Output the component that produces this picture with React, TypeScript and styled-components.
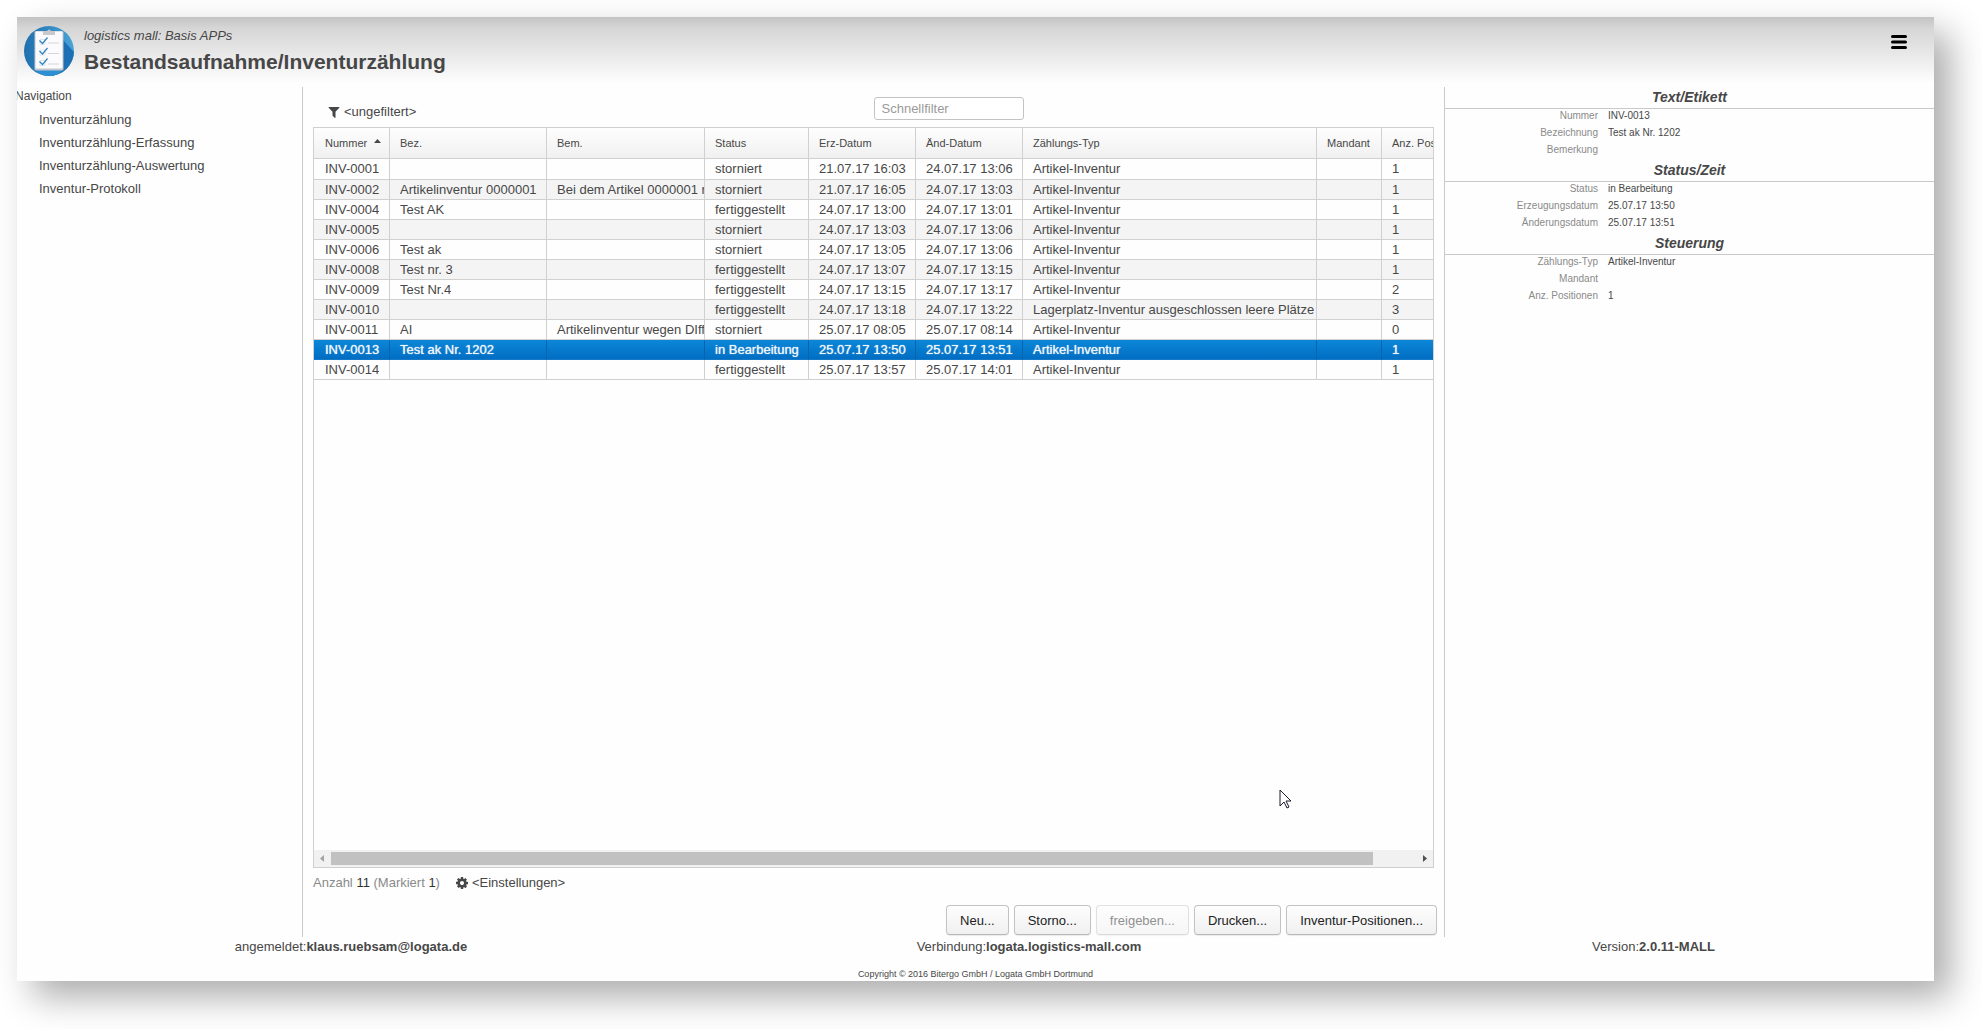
import React from "react";
import styled, { createGlobalStyle, css } from "styled-components";

const Global = createGlobalStyle`
  *, *::before, *::after { box-sizing: border-box; }
  html, body { margin: 0; background: #fff; }
  body {
    font-family: "Liberation Sans", Arial, sans-serif;
    font-size: 13px;
    line-height: 20px;
    color: #474747;
  }
  button, input { font: inherit; color: inherit; }
`;

const Page = styled.div`
  display: flex;
  min-height: 100vh;
  padding: 17px 48px 48px 17px;
`;

const Shell = styled.div`
  position: relative;
  flex: 1;
  min-width: 0;
  display: flex;
  flex-direction: column;
  background: #fefefe;
  box-shadow: 16px 16px 34px rgba(0, 0, 0, 0.33);
`;

const Header = styled.header`
  display: flex;
  align-items: flex-start;
  height: 70px;
  padding: 9px 24px 0 7px;
  background: linear-gradient(#c3c3c3, #d6d6d6 16%, #e4e4e4 45%, #fefefe 95%);
`;

const Logo = styled.svg`
  width: 50px;
  height: 50px;
  flex: none;
`;

const Titles = styled.div`
  flex: 1;
  padding-left: 10px;
`;

const Suite = styled.p`
  margin: 0;
  font-style: italic;
`;

const AppName = styled.h1`
  margin: 4px 0 0;
  font-size: 21px;
  line-height: 24px;
`;

const MenuButton = styled.button`
  margin-top: 5px;
  width: 22px;
  height: 22px;
  padding: 3px;
  border: 0;
  background: none;
  svg { display: block; width: 16px; height: 16px; }
`;

const Body = styled.div`
  flex: 1;
  display: grid;
  grid-template-columns: 286px minmax(0, 1142fr) minmax(0, 489fr);
`;

const Sidebar = styled.nav`
  border-right: 1px solid #c9c9c9;
  overflow: hidden;
`;

const NavTitle = styled.h2`
  margin: 0 0 0 -2px;
  font-size: 12px;
  font-weight: 400;
  line-height: 18px;
`;

const NavList = styled.ul`
  list-style: none;
  margin: 3px 0 0;
  padding: 0 0 0 22px;
`;

const NavItem = styled.li`
  line-height: 23px;
`;

const TextLink = styled.a`
  color: inherit;
  text-decoration: none;
`;

const Main = styled.main`
  display: flex;
  flex-direction: column;
  padding: 0 10px;
  border-right: 1px solid #c9c9c9;
`;

const Toolbar = styled.div`
  display: grid;
  grid-template-columns: 1fr 1fr;
  justify-items: start;
  height: 40px;
`;

const PlainButton = styled.button`
  display: flex;
  align-items: center;
  gap: 3px;
  height: 20px;
  padding: 0;
  border: 0;
  background: none;
  color: #474747;
`;

const FilterButton = styled(PlainButton)`
  margin: 15px 0 0 14px;
`;

const Glyph = styled.svg`
  width: 14px;
  height: 14px;
  fill: currentColor;
`;

const QuickFilter = styled.input`
  width: 150px;
  height: 23px;
  margin-top: 10px;
  padding: 0 7px;
  border: 1px solid #c3c3c3;
  border-radius: 3px;
  background: #fff;
  &::placeholder { color: #9a9a9a; opacity: 1; }
`;

const GridBox = styled.section`
  flex: 1;
  display: flex;
  flex-direction: column;
  border: 1px solid #d0d0d0;
  overflow: hidden;
`;

const Table = styled.table`
  width: 100%;
  table-layout: fixed;
  border-collapse: separate;
  border-spacing: 0;
`;

const cell = css`
  padding: 0 0 0 10px;
  overflow: hidden;
  white-space: nowrap;
  text-align: left;
  border-right: 1px solid #d0d0d0;
  border-bottom: 1px solid #d0d0d0;
  &:first-child { padding-left: 11px; }
  &:last-child { border-right: 0; }
`;

const HeadCell = styled.th`
  ${cell}
  height: 31px;
  font-size: 11px;
  font-weight: 400;
  background: linear-gradient(#fefefe, #f0f0f0);
`;

const SortArrow = styled.svg`
  width: 7px;
  height: 4px;
  margin: 0 0 4px 7px;
`;

const Cell = styled.td`
  ${cell}
  height: 20px;
  line-height: 19px;
  vertical-align: top;
`;

const Row = styled.tr<{ $selected: boolean }>`
  &:nth-child(even) { background: #f4f4f4; }
  &:first-child ${Cell} { height: 21px; }
  ${(p) =>
    p.$selected &&
    css`
      && { background: linear-gradient(#0c87d8, #006cc2); }
      ${Cell} {
        color: #eef6fc;
        text-shadow: 0 0 1px #eef6fc;
        border-right-color: #0663ad;
        border-bottom-color: #1579c6;
      }
    `}
`;

const ScrollTrack = styled.div`
  display: flex;
  align-items: center;
  height: 17px;
  margin-top: auto;
  background: #f1f1f1;
`;

const ScrollArrow = styled.svg`
  flex: none;
  width: 17px;
  height: 17px;
`;

const ScrollRail = styled.div`
  flex: 1;
`;

const ScrollThumb = styled.div`
  width: 96%;
  height: 13px;
  background: #c1c1c1;
`;

const Summary = styled.div`
  display: flex;
  align-items: center;
  gap: 15px;
  height: 30px;
  color: #8a8a8a;
  strong { font-weight: 400; color: #333; }
`;

const Actions = styled.div`
  display: flex;
  justify-content: flex-end;
  gap: 5px;
  margin: 7px -3px 2px 0;
`;

const ActionButton = styled.button`
  height: 30px;
  padding: 1px 13px 0;
  border: 1px solid #c3c3c3;
  border-bottom-color: #b8b8b8;
  border-radius: 4px;
  background: linear-gradient(#fefefe, #f0f0f0);
  color: #222;
  box-shadow: 0 1px 1px rgba(0, 0, 0, 0.08);
  &:disabled { opacity: 0.5; }
`;

const Details = styled.aside`
  min-width: 0;
`;

const GroupTitle = styled.h2`
  height: 22px;
  margin: 0;
  border-bottom: 1px solid #c9c9c9;
  font-size: 14px;
  font-style: italic;
  line-height: 20px;
  text-align: center;
`;

const Fields = styled.dl`
  display: grid;
  grid-template-columns: 153px 1fr;
  column-gap: 10px;
  margin: 0;
  font-size: 10px;
  line-height: 17px;
`;

const FieldName = styled.dt`
  height: 17px;
  margin-top: -2px;
  margin-bottom: 2px;
  color: #8a8a8a;
  text-align: right;
`;

const FieldValue = styled.dd`
  margin: -2px 0 2px;
`;

const Footer = styled.footer`
  height: 44px;
`;

const FooterRow = styled.div`
  display: grid;
  grid-template-columns: 668fr 688fr 561fr;
  text-align: center;
  line-height: 19px;
`;

const Copyright = styled.p`
  margin: 11px 0 0;
  font-size: 9px;
  line-height: 14px;
  text-align: center;
`;

const Pointer = styled.svg`
  position: absolute;
  left: 1262px;
  top: 772px;
  width: 13px;
  height: 21px;
`;

const navItems = [
  "Inventurzählung",
  "Inventurzählung-Erfassung",
  "Inventurzählung-Auswertung",
  "Inventur-Protokoll",
];

const columns: { label: string; width?: number }[] = [
  { label: "Nummer", width: 76 },
  { label: "Bez.", width: 157 },
  { label: "Bem.", width: 158 },
  { label: "Status", width: 104 },
  { label: "Erz-Datum", width: 107 },
  { label: "Änd-Datum", width: 107 },
  { label: "Zählungs-Typ" },
  { label: "Mandant", width: 65 },
  { label: "Anz. Pos.", width: 51 },
];

const item = "Artikel-Inventur";
const rows = [
  ["INV-0001", "", "", "storniert", "21.07.17 16:03", "24.07.17 13:06", item, "", "1"],
  ["INV-0002", "Artikelinventur 0000001", "Bei dem Artikel 0000001 n", "storniert", "21.07.17 16:05", "24.07.17 13:03", item, "", "1"],
  ["INV-0004", "Test AK", "", "fertiggestellt", "24.07.17 13:00", "24.07.17 13:01", item, "", "1"],
  ["INV-0005", "", "", "storniert", "24.07.17 13:03", "24.07.17 13:06", item, "", "1"],
  ["INV-0006", "Test ak", "", "storniert", "24.07.17 13:05", "24.07.17 13:06", item, "", "1"],
  ["INV-0008", "Test nr. 3", "", "fertiggestellt", "24.07.17 13:07", "24.07.17 13:15", item, "", "1"],
  ["INV-0009", "Test Nr.4", "", "fertiggestellt", "24.07.17 13:15", "24.07.17 13:17", item, "", "2"],
  ["INV-0010", "", "", "fertiggestellt", "24.07.17 13:18", "24.07.17 13:22", "Lagerplatz-Inventur ausgeschlossen leere Plätze", "", "3"],
  ["INV-0011", "AI", "Artikelinventur wegen DIff", "storniert", "25.07.17 08:05", "25.07.17 08:14", item, "", "0"],
  ["INV-0013", "Test ak Nr. 1202", "", "in Bearbeitung", "25.07.17 13:50", "25.07.17 13:51", item, "", "1"],
  ["INV-0014", "", "", "fertiggestellt", "25.07.17 13:57", "25.07.17 14:01", item, "", "1"],
];

const groups = [
  { title: "Text/Etikett", fields: [["Nummer", "INV-0013"], ["Bezeichnung", "Test ak Nr. 1202"], ["Bemerkung", ""]] },
  { title: "Status/Zeit", fields: [["Status", "in Bearbeitung"], ["Erzeugungsdatum", "25.07.17 13:50"], ["Änderungsdatum", "25.07.17 13:51"]] },
  { title: "Steuerung", fields: [["Zählungs-Typ", item], ["Mandant", ""], ["Anz. Positionen", "1"]] },
];

const actions = [
  { label: "Neu..." },
  { label: "Storno..." },
  { label: "freigeben...", disabled: true },
  { label: "Drucken..." },
  { label: "Inventur-Positionen..." },
];

const FilterIcon = () => (
  <Glyph viewBox="0 0 1792 1792" aria-hidden="true">
    <path d="M1595 295q17 41-14 70l-493 493v742q0 42-39 59-13 5-25 5-27 0-45-19l-256-256q-19-19-19-45v-486l-493-493q-31-29-14-70 17-39 59-39h1280q42 0 59 39z" />
  </Glyph>
);

const CogIcon = () => (
  <Glyph viewBox="0 0 1792 1792" aria-hidden="true">
    <path d="M1152 896q0-106-75-181t-181-75-181 75-75 181 75 181 181 75 181-75 75-181zm512-109v222q0 12-8 23t-20 13l-185 28q-19 54-39 91 35 50 107 138 10 12 10 25t-9 23q-27 37-99 108t-94 71q-12 0-26-9l-138-108q-44 23-91 38-16 136-29 186-7 28-36 28h-222q-14 0-24.500-8.500t-11.500-21.500l-28-184q-49-16-90-37l-141 107q-10 9-25 9-14 0-25-11-126-114-165-168-7-10-7-23 0-12 8-23 15-21 51-66.500t54-70.500q-27-50-41-99l-183-27q-13-2-21-12.500t-8-23.500v-222q0-12 8-23t19-13l186-28q14-46 39-92-40-57-107-138-10-12-10-24 0-10 9-23 26-36 98.500-107.500t94.500-71.500q13 0 26 10l138 107q44-23 91-38 16-136 29-186 7-28 36-28h222q14 0 24.500 8.500t11.500 21.500l28 184q49 16 90 37l142-107q9-9 24-9 13 0 25 10 129 119 165 170 7 8 7 22 0 12-8 23-15 21-51 66.500t-54 70.500q26 50 41 98l183 28q13 2 21 12.500t8 23.500z" />
  </Glyph>
);

const ChecklistLogo = () => (
  <Logo viewBox="0 0 50 50" aria-hidden="true">
    <defs>
      <clipPath id="disc"><circle cx="25" cy="25" r="25" /></clipPath>
      <linearGradient id="disc-fill" x1="0" y1="0" x2="1" y2="0">
        <stop offset="0" stopColor="#1f6fae" />
        <stop offset="1" stopColor="#4aa3d6" />
      </linearGradient>
    </defs>
    <g clipPath="url(#disc)">
      <rect width="50" height="50" fill="url(#disc-fill)" />
      <path d="M39 14 50 26V40L34 50H24L12 43Z" fill="#1d70b3" />
      <path d="M11 43H39L33 50H18Z" fill="#2b8fd2" />
    </g>
    <rect x="10.500" y="5" width="29" height="39.500" rx="1.500" fill="#c3c6cc" />
    <rect x="11.500" y="5.500" width="27" height="37" rx="1" fill="#fbfbfd" />
    <path d="M19 5h4q2-3 4 0h4v4H19Z" fill="#c8c9cc" />
    <path d="M24 17H35M24 27.500H35M24 38H35" stroke="#d5d5d7" strokeWidth="1.200" />
    <path d="M16 13.500h5v5h-5zM16 24h5v5h-5zM16 34.500h5v5h-5z" fill="none" stroke="#d5e2ee" strokeWidth="0.800" />
    <path
      d="M15.500 14.500l3 3 5-6M15.500 25l3 3 5-6M15.500 35.500l3 3 5-6"
      fill="none"
      stroke="#2d82bf"
      strokeWidth="1.200"
    />
  </Logo>
);

export default function App() {
  return (
    <Page>
      <Global />
      <Shell>
        <Header>
          <ChecklistLogo />
          <Titles>
            <Suite>logistics mall: Basis APPs</Suite>
            <AppName>Bestandsaufnahme/Inventurzählung</AppName>
          </Titles>
          <MenuButton aria-label="Menü">
            <svg viewBox="0 0 16 16">
              <path d="M1.500 2.500h13M1.500 8h13M1.500 13.500h13" stroke="#000" strokeWidth="3" strokeLinecap="round" />
            </svg>
          </MenuButton>
        </Header>

        <Body>
          <Sidebar>
            <NavTitle>Navigation</NavTitle>
            <NavList>
              {navItems.map((label) => (
                <NavItem key={label}><TextLink href="#">{label}</TextLink></NavItem>
              ))}
            </NavList>
          </Sidebar>

          <Main>
            <Toolbar>
              <FilterButton><FilterIcon />&lt;ungefiltert&gt;</FilterButton>
              <QuickFilter type="text" placeholder="Schnellfilter" aria-label="Schnellfilter" />
            </Toolbar>
            <GridBox>
              <Table>
                <colgroup>
                  {columns.map((c) => <col key={c.label} width={c.width} />)}
                </colgroup>
                <thead>
                  <tr>
                    {columns.map((c, i) => (
                      <HeadCell key={c.label} scope="col">
                        {c.label}
                        {i === 0 && (
                          <SortArrow viewBox="0 0 7 4"><path d="M0 4 3.500 0 7 4Z" fill="#474747" /></SortArrow>
                        )}
                      </HeadCell>
                    ))}
                  </tr>
                </thead>
                <tbody>
                  {rows.map((r) => (
                    <Row key={r[0]} $selected={r[0] === "INV-0013"}>
                      {r.map((value, i) => <Cell key={i}>{value}</Cell>)}
                    </Row>
                  ))}
                </tbody>
              </Table>
              <ScrollTrack>
                <ScrollArrow viewBox="0 0 17 17"><path d="M10 5v7L6 8.500Z" fill="#a3a3a3" /></ScrollArrow>
                <ScrollRail><ScrollThumb /></ScrollRail>
                <ScrollArrow viewBox="0 0 17 17"><path d="M7 5v7l4-3.500Z" fill="#505050" /></ScrollArrow>
              </ScrollTrack>
            </GridBox>
            <Summary>
              <span>Anzahl <strong>11</strong> (Markiert <strong>1</strong>)</span>
              <PlainButton><CogIcon />&lt;Einstellungen&gt;</PlainButton>
            </Summary>
            <Actions>
              {actions.map((a) => (
                <ActionButton key={a.label} disabled={a.disabled}>{a.label}</ActionButton>
              ))}
            </Actions>
          </Main>

          <Details>
            {groups.map((g) => (
              <section key={g.title}>
                <GroupTitle>{g.title}</GroupTitle>
                <Fields>
                  {g.fields.map(([name, value]) => (
                    <React.Fragment key={name}>
                      <FieldName>{name}</FieldName>
                      <FieldValue>{value}</FieldValue>
                    </React.Fragment>
                  ))}
                </Fields>
              </section>
            ))}
          </Details>
        </Body>

        <Footer>
          <FooterRow>
            <span>angemeldet:<b>klaus.ruebsam@logata.de</b></span>
            <span>Verbindung:<b>logata.logistics-mall.com</b></span>
            <span>Version:<b>2.0.11-MALL</b></span>
          </FooterRow>
          <Copyright>Copyright © 2016 Bitergo GmbH / Logata GmbH Dortmund</Copyright>
        </Footer>

        <Pointer viewBox="0 0 13 21">
          <path d="M1 1v16l4-4 3 6 2-1-3-6h5Z" fill="#fff" stroke="#1b1b2b" strokeWidth="1" />
        </Pointer>
      </Shell>
    </Page>
  );
}
